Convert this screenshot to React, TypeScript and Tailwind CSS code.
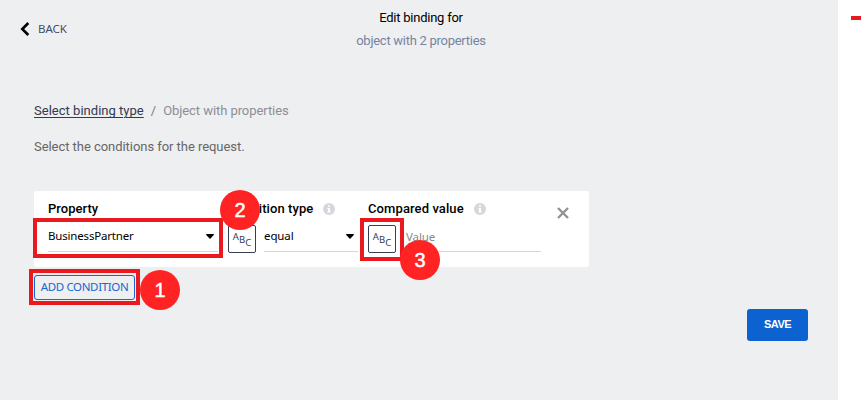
import React from 'react';

const heading = "font-['Roboto','Liberation_Sans',sans-serif]";
const body = "font-['Noto_Sans','Open_Sans',sans-serif]";

function Caret() {
  return (
    <svg width="8" height="5" viewBox="0 0 8 5" className="mt-px block shrink-0">
      <path d="M0 .8Q0 0 .8 0H7.2Q8 0 8 .8L4.5 4.6Q4 5 3.5 4.6Z" fill="#000" />
    </svg>
  );
}

function Info() {
  return (
    <svg width="12" height="12" viewBox="0 0 12 12" className="block shrink-0">
      <circle cx="6" cy="6" r="6" fill="#d5d7dc" />
      <path d="M5 2.2h2v1.6H5zM4.3 5H7v3.6h.8v1H4.2v-1H5V6h-.7z" fill="#fff" />
    </svg>
  );
}

function TypeBox() {
  return (
    <div className={`${body} flex h-7 w-7 shrink-0 justify-center rounded-[2px] border border-[#354052] bg-white pt-[5px] text-[9.5px] leading-[12px] text-[#354052]`}>
      <span>A</span>
      <span className="mt-[3px]">B</span>
      <span className="mt-[6px]">C</span>
    </div>
  );
}

function Marker({ n, place }: { n: number; place: string }) {
  return (
    <div className={`absolute ${place} flex h-10 w-10 items-center justify-center rounded-full bg-[#ff2323] font-['Liberation_Sans',Arial,sans-serif] text-[20px] leading-none text-white [-webkit-text-stroke:0.5px_white]`}>
      {n}
    </div>
  );
}

function Label({ text, tracking, info = false }: { text: string; tracking: string; info?: boolean }) {
  return (
    <div className={`${heading} flex h-[18px] items-center gap-[10px] text-[13px] font-medium whitespace-nowrap text-black`}>
      <span className={tracking}>{text}</span>
      {info && <Info />}
    </div>
  );
}

export default function App() {
  return (
    <div className="relative flex h-[400px] w-[862px] overflow-hidden bg-white">
      <main className="flex h-full w-[838px] shrink-0 flex-col bg-[#eeeff1]">
        <header className="grid h-[102px] grid-cols-[200px_442px_196px]">
          <div className={`${body} flex h-[58px] items-center pl-[20px] text-[11.5px] text-[#454d5e]`}>
            <svg width="10" height="14" viewBox="0 0 10 14" className="mr-2 block">
              <path d="M8.3 1 2.3 7 8.3 13" fill="none" stroke="#000" strokeWidth="2.6" />
            </svg>
            <span className="tracking-[-0.05px]">BACK</span>
          </div>
          <div className={`${heading} flex flex-col items-center pt-[6px] text-[13px] leading-[23px]`}>
            <span className="tracking-[-0.24px] text-black">Edit binding for</span>
            <span className="tracking-[-0.27px] text-[#76859f]">object with 2 properties</span>
          </div>
        </header>

        <nav className={`${heading} flex h-[18px] items-center pl-[34px] text-[13px] whitespace-nowrap`}>
          <a className="tracking-[0.02px] text-[#323a50] underline underline-offset-2">Select binding type</a>
          <span className="mr-[7px] ml-[7px] text-[#777b84]">/</span>
          <span className="tracking-[-0.07px] text-[#8b8e96]">Object with properties</span>
        </nav>
        <p className={`${heading} mt-[18px] h-[18px] pl-[34px] text-[13px] leading-[18px] tracking-[-0.05px] text-[#666]`}>
          Select the conditions for the request.
        </p>

        <section className="mt-[35px] ml-[34px] flex h-[76px] w-[555px] shrink-0 rounded-[2px] bg-white pt-[9px] pl-[14px]">
          <div className="w-[180px]">
            <Label text="Property" tracking="tracking-[0.03px]" />
            <div className={`${body} flex h-[34px] w-[170px] items-center justify-between border-b border-[#d2d5d9] pt-[3px] pr-1 text-[11.5px] text-black`}>
              <span className="tracking-[-0.18px]">BusinessPartner</span>
              <Caret />
            </div>
          </div>
          <div className="w-[140px]">
            <Label text="Condition type" tracking="tracking-[0.08px]" info />
            <div className="flex h-[35px] gap-2 pt-[7px]">
              <TypeBox />
              <div className={`${body} mt-[-7px] flex h-[34px] w-[94px] items-center justify-between border-b border-[#d2d5d9] pt-[3px] pr-1 text-[11.5px] text-black`}>
                <span className="tracking-[-0.1px]">equal</span>
                <Caret />
              </div>
            </div>
          </div>
          <div className="w-[173px]">
            <Label text="Compared value" tracking="tracking-[0.1px]" info />
            <div className="flex h-[35px] gap-2 pt-[7px]">
              <TypeBox />
              <div className={`${body} mt-[-7px] flex h-[34px] w-[137px] items-center border-b border-[#d2d5d9] pt-[4px] pl-[2px] text-[11.5px] tracking-[-0.1px] text-[#888]`}>
                Value
              </div>
            </div>
          </div>
          <svg width="12" height="12" viewBox="0 0 12 12" className="mt-[7px] ml-[16px] block">
            <path d="M1 1l10 10M11 1L1 11" stroke="#929292" strokeWidth="2.4" fill="none" />
          </svg>
        </section>

        <button className={`${body} mt-[8px] ml-[34px] h-[25px] w-[101px] shrink-0 rounded-[3px] border border-[#1667cf] pb-[2px] text-[11.5px] leading-[20px] tracking-[-0.35px] whitespace-nowrap text-[#1667cf]`}>
          ADD CONDITION
        </button>
        <button className="mt-[9px] ml-[747px] h-8 w-[61px] shrink-0 rounded-[3px] bg-[#0b62d0] pb-[2px] font-['Liberation_Sans',Arial,sans-serif] text-[11px] leading-[30px] font-bold tracking-[-0.5px] text-white">
          SAVE
        </button>
      </main>
      <aside className="flex-1 pt-4 pl-[13px]">
        <div className="h-1 w-[10px] bg-[#e51b1e]" />
      </aside>

      <div className="absolute top-[218px] left-[33px] h-[40px] w-[190px] border-4 border-[#e9191d]" />
      <div className="absolute top-[269px] left-[29px] h-[36px] w-[111px] border-4 border-[#e9191d]" />
      <div className="absolute top-[218px] left-[360px] h-[43px] w-[44px] border-4 border-[#e9191d]" />
      <Marker n={1} place="top-[270px] left-[140px]" />
      <Marker n={2} place="top-[190px] left-[220px]" />
      <Marker n={3} place="top-[240px] left-[400px]" />
    </div>
  );
}
